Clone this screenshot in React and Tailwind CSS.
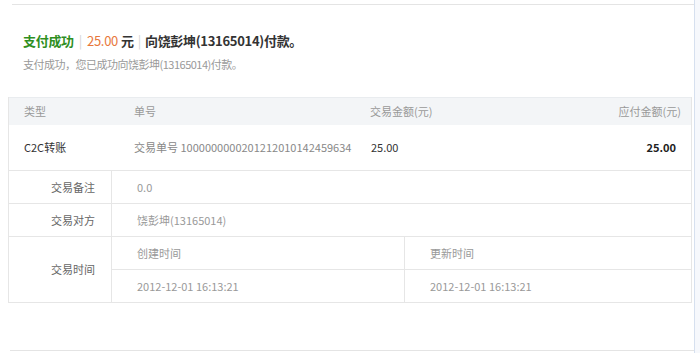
export default function App() {
  const font = { fontFamily: '"Noto Sans CJK SC", "Liberation Sans", sans-serif' };
  return (
    <div className="w-[700px] h-[353px] bg-white flex overflow-hidden" style={font}>
      <div className="flex-1 flex flex-col pt-[4px]">
        <div className="ml-[12px] h-px bg-[#e4e4e4]" />
        <div className="pl-[23px] pt-[27px] text-[13px] font-bold leading-[18px] text-[#333] tracking-[-0.3px]">
          <span className="text-[#2f8f1f]">支付成功</span>
          <span className="mx-[5px] font-normal text-[#d5d5d5]">|</span>
          <span className="font-normal text-[#e8783c]">25.00</span>
          <span className="ml-[3px]">元</span>
          <span className="mx-[4px] font-normal text-[#d5d5d5]">|</span>
          <span>向饶彭坤(13165014)付款。</span>
        </div>
        <div className="pl-[23px] mt-[6px] text-[11px] leading-[16px] text-[#999] tracking-[-0.5px]">
          支付成功，您已成功向饶彭坤(13165014)付款。
        </div>

        <div className="ml-[8px] mr-[2px] mt-[25px] border-l border-r border-b border-[#e6e6e6] text-[11px]">
          <div className="h-[28px] bg-[#f3f5f7] border-t border-[#e9ecef] flex items-center text-[#999]">
            <div className="w-[110px] pl-[15px]">类型</div>
            <div className="w-[236px] pl-[15px]">单号</div>
            <div className="flex-1 pl-[15px]">交易金额(元)</div>
            <div className="pr-[10px]">应付金额(元)</div>
          </div>
          <div className="h-[46px] flex items-center border-b border-[#e6e6e6]">
            <div className="w-[110px] pl-[15px] text-[#333]">C2C转账</div>
            <div className="w-[236px] pl-[15px] text-[#888]">交易单号 1000000000201212010142459634</div>
            <div className="flex-1 pl-[16px] text-[#333]">25.00</div>
            <div className="pr-[15px] font-bold text-[#222]">25.00</div>
          </div>
          <div className="h-[33px] flex border-b border-[#e6e6e6]">
            <div className="w-[103px] border-r border-[#e6e6e6] flex items-center justify-end pr-[16px] text-[#666]">交易备注</div>
            <div className="flex-1 flex items-center pl-[25px] text-[#999]">0.0</div>
          </div>
          <div className="h-[33px] flex border-b border-[#e6e6e6]">
            <div className="w-[103px] border-r border-[#e6e6e6] flex items-center justify-end pr-[16px] text-[#666]">交易对方</div>
            <div className="flex-1 flex items-center pl-[25px] text-[#999]">饶彭坤(13165014)</div>
          </div>
          <div className="h-[65px] flex">
            <div className="w-[103px] border-r border-[#e6e6e6] flex items-center justify-end pr-[16px] text-[#666]">交易时间</div>
            <div className="flex-1 grid grid-cols-[293px_1fr] grid-rows-[33px_32px] text-[#999]">
              <div className="flex items-center pl-[25px] border-r border-b border-[#e6e6e6]">创建时间</div>
              <div className="flex items-center pl-[25px] border-b border-[#e6e6e6]">更新时间</div>
              <div className="flex items-center pl-[25px] border-r border-[#e6e6e6]">2012-12-01 16:13:21</div>
              <div className="flex items-center pl-[25px]">2012-12-01 16:13:21</div>
            </div>
          </div>
        </div>

        <div className="flex-1" />
        <div className="ml-[10px] h-px bg-[#e4e4e4] mb-[2px]" />
      </div>
      <div className="w-[6px] border-l border-[#d6e0ef] bg-[#f6f8fc]" />
    </div>
  );
}
